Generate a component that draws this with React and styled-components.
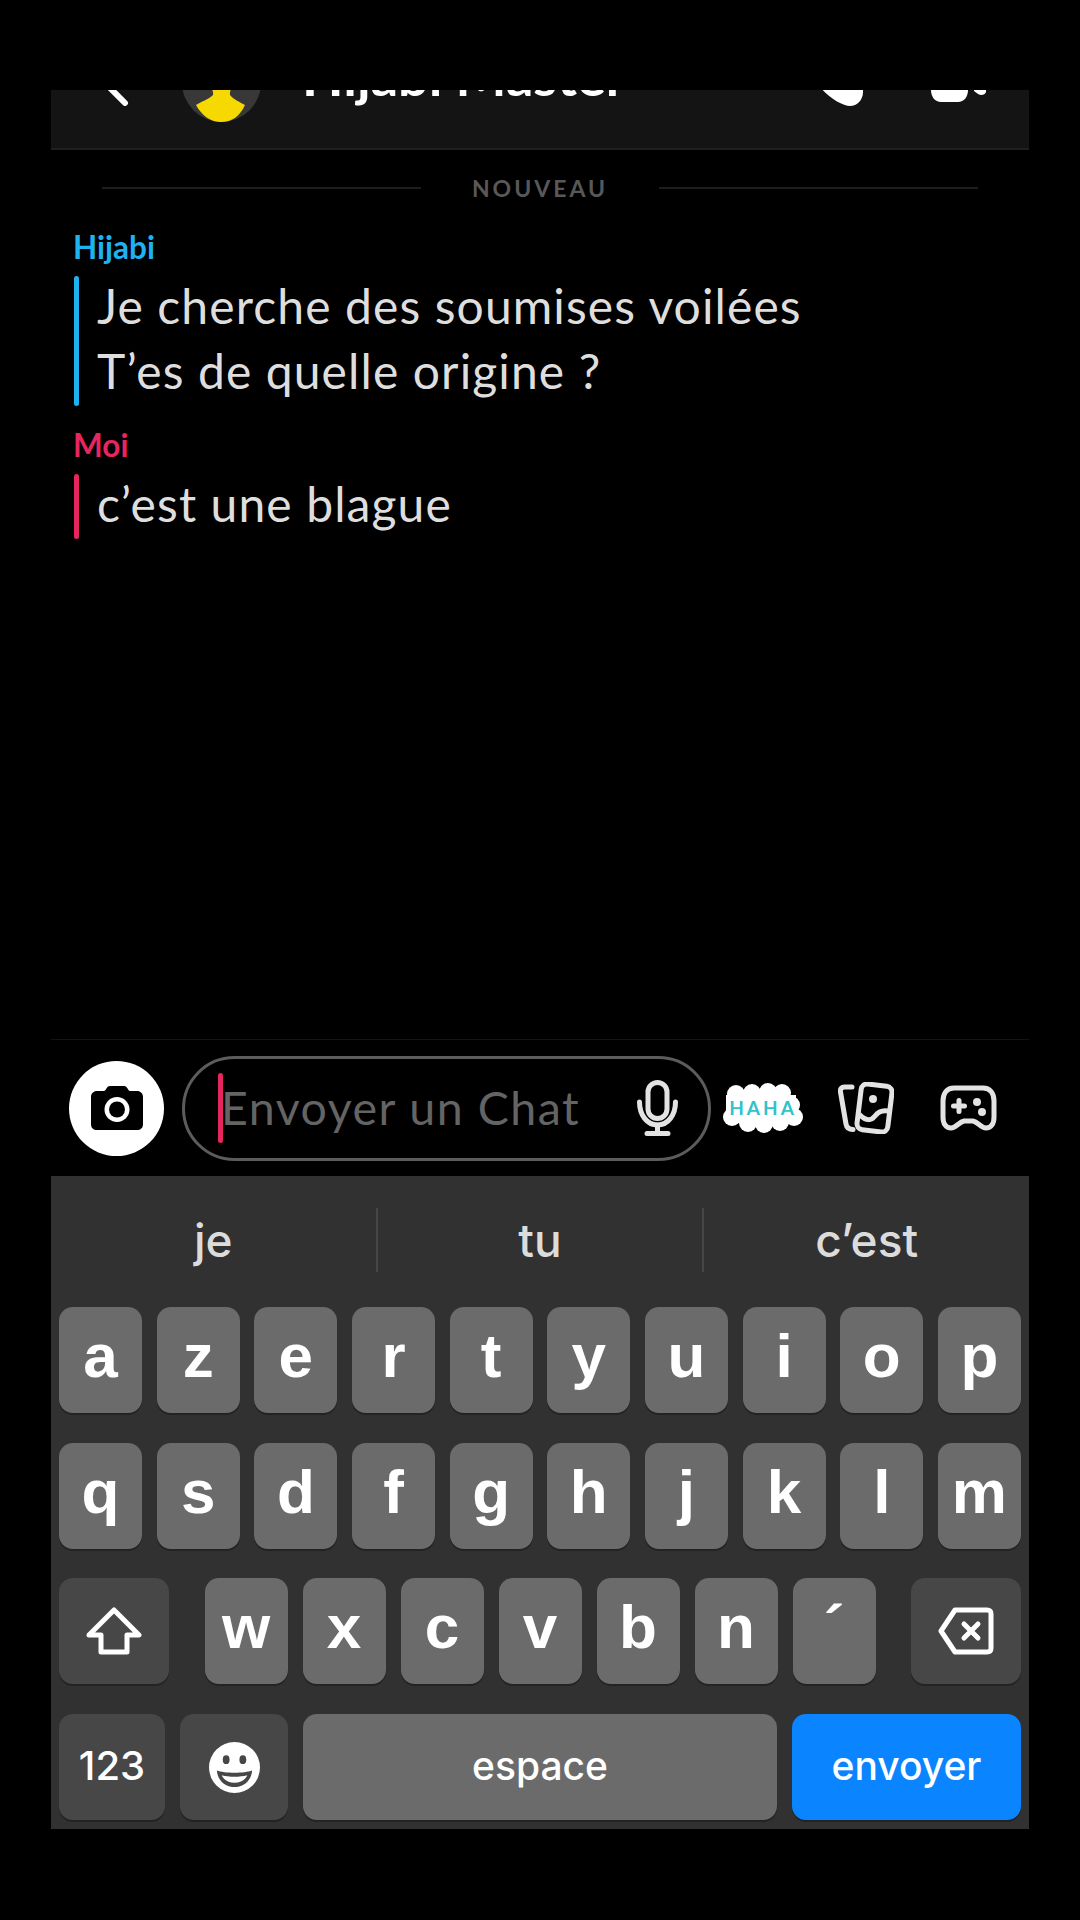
import React from "react";
import styled, { createGlobalStyle } from "styled-components";

const GlobalStyle = createGlobalStyle`
  body {
    margin: 0;
    background: #000;
    font-family: "Lato", "Noto Sans", sans-serif;
  }
`;

const Page = styled.div`
  display: flex;
  flex-direction: column;
  box-sizing: border-box;
  width: 1080px;
  height: 1920px;
  padding: 90px 51px 91px;
  background: #000;
`;

const Header = styled.header`
  display: flex;
  align-items: flex-end;
  flex-shrink: 0;
  box-sizing: border-box;
  height: 60px;
  padding: 0 0 26px;
  overflow: hidden;
  background: #141414;
  border-bottom: 2px solid #1f1f1f;
`;

const HeaderSlot = styled.div`
  display: flex;
  flex-shrink: 0;
  margin-left: ${(p) => p.$left}px;
  margin-bottom: ${(p) => p.$drop || 0}px;
`;

const Title = styled.div`
  flex-shrink: 0;
  margin-left: 41px;
  margin-bottom: 16px;
  width: 403px;
  color: #fff;
  font-size: 54px;
  font-weight: 700;
  line-height: 60px;
  white-space: nowrap;
`;

const Messages = styled.main`
  flex: 1;
  display: flex;
  flex-direction: column;
  min-height: 0;
`;

const NewDivider = styled.div`
  display: flex;
  align-items: center;
  gap: 51px;
  height: 28px;
  margin: 24px 0 30px;
  padding: 0 51px;
  color: #585858;
  font-size: 23px;
  font-weight: 700;
  letter-spacing: 3px;
`;

const DividerLine = styled.span`
  flex: 1;
  height: 2px;
  background: #1d1d1d;
`;

const Message = styled.section`
  display: flex;
  flex-direction: column;
  margin: 0 0 24px 23px;
`;

const Sender = styled.div`
  height: 36px;
  margin-bottom: 8px;
  margin-left: -1px;
  color: ${(p) => p.$color};
  font-size: 31.5px;
  font-weight: 700;
  line-height: 30px;
`;

const Body = styled.div`
  display: flex;
  gap: 18px;
`;

const Bar = styled.span`
  width: 5px;
  border-radius: 3px;
  background: ${(p) => p.$color};
`;

const Lines = styled.div`
  margin: -3px 0 3px;
  color: #dedede;
  font-size: 48px;
  line-height: 65px;
  letter-spacing: 1.1px;
  white-space: nowrap;
`;

const Composer = styled.div`
  display: flex;
  align-items: center;
  flex-shrink: 0;
  box-sizing: border-box;
  height: 137px;
  padding-left: 18px;
  border-top: 1px solid #141414;
`;

const CameraButton = styled.div`
  display: flex;
  align-items: center;
  justify-content: center;
  flex-shrink: 0;
  width: 95px;
  height: 95px;
  margin-right: 18px;
  border-radius: 50%;
  background: #fff;
`;

const InputPill = styled.div`
  display: flex;
  align-items: center;
  flex-shrink: 0;
  box-sizing: border-box;
  width: 529px;
  height: 105px;
  padding: 0 30px 0 33px;
  border: 3px solid #5c5c5c;
  border-radius: 53px;
`;

const Caret = styled.span`
  flex-shrink: 0;
  width: 5px;
  height: 70px;
  border-radius: 3px;
  background: #e5265f;
`;

const Placeholder = styled.span`
  flex: 1;
  margin-left: -2px;
  padding-bottom: 2px;
  color: #646464;
  font-size: 46.5px;
  letter-spacing: 1.5px;
  white-space: nowrap;
`;

const ToolSlot = styled.div`
  display: flex;
  align-items: center;
  justify-content: center;
  width: 103px;
`;

const Keyboard = styled.div`
  display: flex;
  flex-direction: column;
  flex-shrink: 0;
  box-sizing: border-box;
  height: 653px;
  padding: 0 8px 9px;
  background: #313131;
`;

const Suggestions = styled.div`
  display: flex;
  align-items: center;
  box-sizing: border-box;
  height: 132px;
  margin: 0 -8px;
  padding-bottom: 4px;
`;

const Suggestion = styled.div`
  flex: 1;
  height: 64px;
  color: #dcdcdc;
  font-family: "Inter", "Liberation Sans", sans-serif;
  font-size: 46px;
  font-weight: 500;
  line-height: 64px;
  text-align: center;
  border-left: ${(p) => (p.$divided ? "2px solid #474747" : "none")};
`;

const Rows = styled.div`
  display: flex;
  flex-direction: column;
  gap: 29.6px;
`;

const Row = styled.div`
  display: flex;
  justify-content: space-between;
`;

const KeyGroup = styled.div`
  display: flex;
  gap: 15px;
`;

const Key = styled.div`
  display: flex;
  align-items: center;
  justify-content: center;
  flex-shrink: 0;
  box-sizing: border-box;
  width: ${(p) => p.$width || 83}px;
  height: 106px;
  padding-bottom: ${(p) => p.$lift ?? 0}px;
  border-radius: 14px;
  background: ${(p) => p.$bg || "#6b6b6b"};
  box-shadow: 0 2px 0 #232323;
  color: #fff;
  font-family: "Inter", "Liberation Sans", sans-serif;
  font-size: ${(p) => p.$size || 39}px;
  font-weight: ${(p) => p.$weight || 500};
`;

const LetterKey = styled(Key)`
  padding-bottom: 9px;
  font-family: "Liberation Sans", "Inter", sans-serif;
  font-size: 62px;
  font-weight: 700;
`;

const row1 = ["a", "z", "e", "r", "t", "y", "u", "i", "o", "p"];
const row2 = ["q", "s", "d", "f", "g", "h", "j", "k", "l", "m"];
const row3 = ["w", "x", "c", "v", "b", "n", "´"];

const ChevronIcon = () => (
  <svg width="30" height="40" viewBox="0 0 30 40" fill="none">
    <path d="M20 4 L5 22 L20 37" stroke="#fff" strokeWidth="6" strokeLinecap="round" strokeLinejoin="round" />
  </svg>
);

const AvatarIcon = () => (
  <svg width="79" height="79" viewBox="0 0 79 79">
    <circle cx="39.5" cy="39.5" r="39.5" fill="#383838" />
    <path d="M24 30 C24 42 32 44 31 52 C26 57 18 59 14 62 C20 73 29 79 39 79 C50 79 58 73 63 62 C58 59 52 57 48 52 C47 44 55 42 55 30 Z" fill="#f6d900" />
  </svg>
);

const BubbleIcon = () => (
  <svg width="44" height="40" viewBox="0 0 44 40">
    <path d="M0 0 H42 V26 C42 34 36 40 29 40 C22 40 8 32 0 22 Z" fill="#fff" />
  </svg>
);

const VideoIcon = () => (
  <svg width="56" height="34" viewBox="0 0 56 34">
    <path d="M0 0 H37 V22 C37 29 33 34 27 34 H10 C4 34 0 29 0 22 Z" fill="#fff" />
    <path d="M43 0 H55 V24 C54 27 50 28 47 26 L43 23 Z" fill="#fff" />
  </svg>
);

const CameraIcon = () => (
  <svg width="52" height="46" viewBox="0 0 52 46">
    <path
      d="M6 6 H13 C15 6 15.500 1 19 1 H33 C36.500 1 37 6 39 6 H46 C49.500 6 52 8.500 52 12 V39 C52 43 49.500 45 46 45 H6 C2.500 45 0 43 0 39 V12 C0 8.500 2.500 6 6 6 Z"
      fill="#000"
    />
    <circle cx="26" cy="24.500" r="12.500" fill="#fff" />
    <circle cx="26" cy="24.500" r="8" fill="#000" />
  </svg>
);

const MicIcon = () => (
  <svg width="41" height="56" viewBox="0 0 41 56" fill="none" stroke="#e3e3e3" strokeWidth="5" strokeLinecap="round">
    <rect x="11" y="2.500" width="19" height="36" rx="9.500" />
    <path d="M2.500 22 C2.500 35 10 45 20.500 45 C31 45 38.500 35 38.500 22" />
    <path d="M20.500 45 V53.500 M10 53.500 H31" />
  </svg>
);

const StickerIcon = () => (
  <svg width="82" height="50" viewBox="0 0 82 50">
    <g fill="#fff">
      <circle cx="14" cy="11" r="9" />
      <circle cx="30" cy="10" r="9" />
      <circle cx="46" cy="9" r="9" />
      <circle cx="60" cy="10" r="9" />
      <circle cx="69" cy="22" r="9" />
      <circle cx="72" cy="34" r="9" />
      <circle cx="58" cy="39" r="9" />
      <circle cx="42" cy="41" r="9" />
      <circle cx="26" cy="40" r="9" />
      <circle cx="10" cy="34" r="9" />
      <rect x="4" y="12" width="70" height="28" />
    </g>
    <text x="41" y="32" fill="#2fc4cc" fontFamily="Lato, sans-serif" fontSize="19" fontWeight="700" letterSpacing="3" textAnchor="middle">
      HAHA
    </text>
  </svg>
);

const PhotosIcon = () => (
  <svg width="56" height="52" viewBox="0 0 56 52" fill="none" stroke="#e3e3e3" strokeWidth="5" strokeLinecap="round" strokeLinejoin="round">
    <path d="M14 5 H6.500 C3.500 5 2 7 2.500 10 L8 42 C8.700 46 11 47.500 15 47.500" />
    <rect x="21" y="3" width="31" height="46" rx="6" transform="rotate(7 36.500 26)" />
    <circle cx="35" cy="17" r="4" fill="#e3e3e3" stroke="none" />
    <path d="M22 33 C28 39 33 39 37 34 C40 30 44 28 50 29" />
  </svg>
);

const GameIcon = () => (
  <svg width="57" height="46" viewBox="0 0 57 46" fill="none" stroke="#e3e3e3" strokeWidth="5" strokeLinecap="round" strokeLinejoin="round">
    <path d="M14 3 H43 C50 3 54 8 54 16 V32 C54 39 51 43 46 43 C41 43 38 37 33 36 H24 C19 37 16 43 11 43 C6 43 3 39 3 32 V16 C3 8 7 3 14 3 Z" />
    <path d="M19 15.500 V26.500 M13.500 21 H24.500" />
    <circle cx="37" cy="17" r="4" fill="#e3e3e3" stroke="none" />
    <circle cx="42" cy="27" r="4" fill="#e3e3e3" stroke="none" />
  </svg>
);

const ShiftIcon = () => (
  <svg width="56" height="48" viewBox="0 0 56 48" fill="none" stroke="#fff" strokeWidth="5" strokeLinejoin="round">
    <path d="M28 3 L53 28 H41 V45 H15 V28 H3 Z" />
  </svg>
);

const BackspaceIcon = () => (
  <svg width="56" height="48" viewBox="0 0 56 48" fill="none" stroke="#fff" strokeWidth="5" strokeLinejoin="round" strokeLinecap="round">
    <path d="M17 3 H49 C52 3 53 4 53 7 V41 C53 44 52 45 49 45 H17 L3 24 Z" />
    <path d="M26 17 L40 31 M40 17 L26 31" />
  </svg>
);

const SmileyIcon = () => (
  <svg width="51" height="51" viewBox="-26 -26 52 52">
    <circle r="26" fill="#fff" />
    <ellipse cx="-8.500" cy="-8" rx="3.500" ry="4.500" fill="#474747" />
    <ellipse cx="8.500" cy="-8" rx="3.500" ry="4.500" fill="#474747" />
    <path d="M-18 3 C-10 6 10 6 18 3 C17 14 9 20 0 20 C-9 20 -17 14 -18 3 Z" fill="#474747" />
    <path d="M-13 8 C-6 10 6 10 13 8 C11 13 6 15.500 0 15.500 C-6 15.500 -11 13 -13 8 Z" fill="#fff" />
  </svg>
);

export default function App() {
  return (
    <>
      <GlobalStyle />
      <Page>
        <Header>
          <HeaderSlot $left={54} $drop={16}>
            <ChevronIcon />
          </HeaderSlot>
          <HeaderSlot $left={47}>
            <AvatarIcon />
          </HeaderSlot>
          <Title>Hijabi Master</Title>
          <HeaderSlot $left={116} $drop={16}>
            <BubbleIcon />
          </HeaderSlot>
          <HeaderSlot $left={66} $drop={20}>
            <VideoIcon />
          </HeaderSlot>
        </Header>

        <Messages>
          <NewDivider>
            <DividerLine />
            NOUVEAU
            <DividerLine />
          </NewDivider>

          <Message>
            <Sender $color="#1db2f0">Hijabi</Sender>
            <Body>
              <Bar $color="#1db2f0" />
              <Lines>
                Je cherche des soumises voilées
                <br />
                T’es de quelle origine ?
              </Lines>
            </Body>
          </Message>

          <Message>
            <Sender $color="#e5265f">Moi</Sender>
            <Body>
              <Bar $color="#e5265f" />
              <Lines>c’est une blague</Lines>
            </Body>
          </Message>
        </Messages>

        <Composer>
          <CameraButton>
            <CameraIcon />
          </CameraButton>
          <InputPill>
            <Caret />
            <Placeholder>Envoyer un Chat</Placeholder>
            <MicIcon />
          </InputPill>
          <ToolSlot>
            <StickerIcon />
          </ToolSlot>
          <ToolSlot>
            <PhotosIcon />
          </ToolSlot>
          <ToolSlot>
            <GameIcon />
          </ToolSlot>
        </Composer>

        <Keyboard>
          <Suggestions>
            <Suggestion>je</Suggestion>
            <Suggestion $divided>tu</Suggestion>
            <Suggestion $divided>c’est</Suggestion>
          </Suggestions>
          <Rows>
            <Row>
              {row1.map((k) => (
                <LetterKey key={k}>{k}</LetterKey>
              ))}
            </Row>
            <Row>
              {row2.map((k) => (
                <LetterKey key={k}>{k}</LetterKey>
              ))}
            </Row>
            <Row>
              <Key $width={110} $bg="#474747">
                <ShiftIcon />
              </Key>
              <KeyGroup>
                {row3.map((k) => (
                  <LetterKey key={k}>{k}</LetterKey>
                ))}
              </KeyGroup>
              <Key $width={110} $bg="#474747">
                <BackspaceIcon />
              </Key>
            </Row>
            <Row>
              <Key $width={106} $bg="#474747" $size={40} $lift={3}>
                123
              </Key>
              <Key $width={108} $bg="#474747">
                <SmileyIcon />
              </Key>
              <Key $width={474} $lift={4}>
                espace
              </Key>
              <Key $width={229} $bg="#0a84ff" $lift={4}>
                envoyer
              </Key>
            </Row>
          </Rows>
        </Keyboard>
      </Page>
    </>
  );
}
